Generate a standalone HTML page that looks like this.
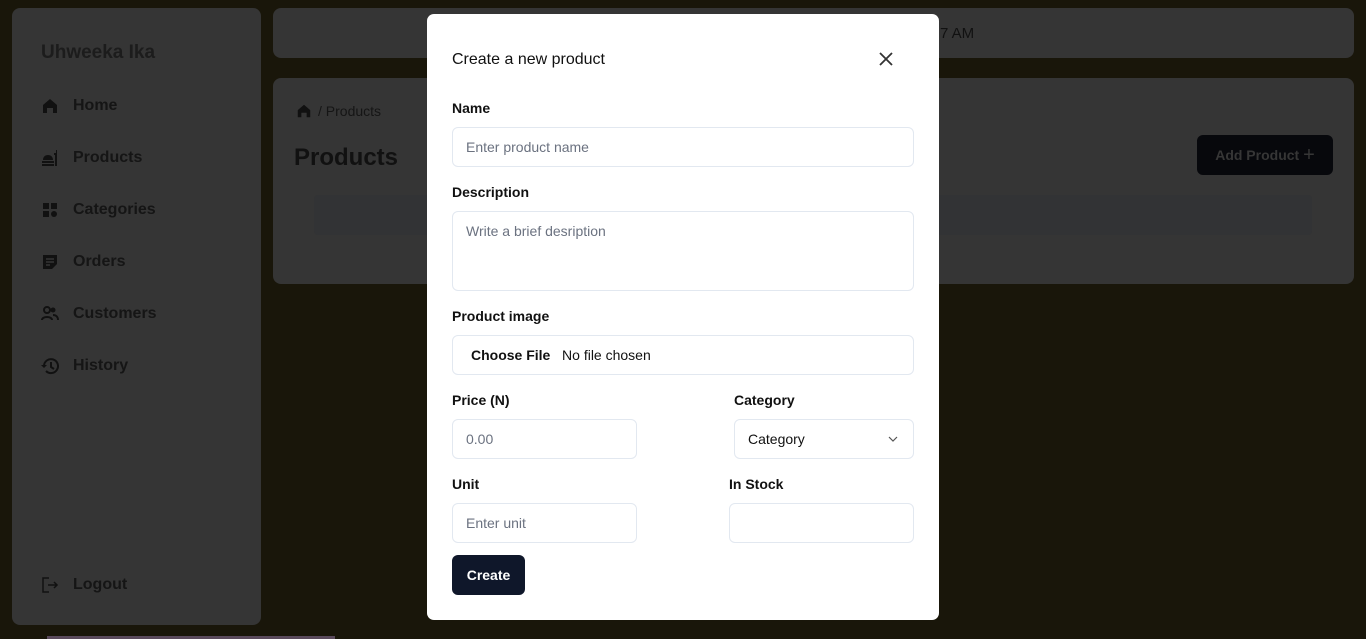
<!DOCTYPE html>
<html><head><style>
*{box-sizing:border-box;margin:0;padding:0}
body{width:1366px;height:639px;background:#19160a;font-family:"Liberation Sans",sans-serif;position:relative;overflow:hidden;color:#111}
.panel{position:absolute;background:#353535;border-radius:8px}
.nav{position:absolute;left:41px;display:flex;align-items:center;font-size:16px;font-weight:bold;color:#151515}
.nav svg{width:18px;height:18px;margin-right:14px}
.modal{position:absolute;left:427px;top:14px;width:512px;height:606px;background:#fff;border-radius:7px}
.lbl{position:absolute;font-size:14px;font-weight:bold;color:#111}
.inp{position:absolute;border:1px solid #e2e8f0;border-radius:6px;font-size:14px;color:#6b7280;padding-left:13px;display:flex;align-items:center}
</style></head><body>
<div class="panel" style="left:12px;top:8px;width:249px;height:617px"></div>
<div style="position:absolute;left:41px;top:42px;font-size:19px;font-weight:bold;color:#1c1c1c">Uhweeka Ika</div>
<div class="nav" style="top:97px"><svg viewBox="0 0 18 18"><path d="M2 8L9 2l7 6v8h-4v-5H6v5H2z" fill="#111"/></svg>Home</div>
<div class="nav" style="top:149px"><svg viewBox="0 0 18 18"><path d="M1 12h12v2H1zM1 15h12v2H1zM2 11c0-3 2-5 5-5s5 2 5 5zM13 4h2V1h1v16h-2V6h-1z" fill="#111"/></svg>Products</div>
<div class="nav" style="top:201px"><svg viewBox="0 0 18 18"><rect x="2" y="2" width="6" height="6" fill="#111"/><rect x="10" y="2" width="6" height="6" fill="#111"/><rect x="2" y="10" width="6" height="6" fill="#111"/><circle cx="13" cy="13" r="3" fill="#111"/></svg>Categories</div>
<div class="nav" style="top:253px"><svg viewBox="0 0 18 18"><path d="M2 2h14v9l-5 5H2z" fill="#111"/><path d="M5 6h8M5 9h8M5 12h4" stroke="#353535" stroke-width="1.5"/></svg>Orders</div>
<div class="nav" style="top:305px"><svg viewBox="0 0 18 18"><circle cx="6" cy="5" r="3" fill="none" stroke="#111" stroke-width="2"/><circle cx="12" cy="5" r="2.5" fill="#111"/><path d="M1 15c0-4 10-4 10 0M12 10c3 0 5 2 5 5" fill="none" stroke="#111" stroke-width="2"/></svg>Customers</div>
<div class="nav" style="top:357px"><svg viewBox="0 0 18 18"><path d="M3 9a7 7 0 1 1 2 5" fill="none" stroke="#111" stroke-width="2"/><path d="M0 8l3 3 3-3z" fill="#111"/><path d="M10 5v5l3 2" fill="none" stroke="#111" stroke-width="2"/></svg>History</div>
<div class="nav" style="top:576px"><svg viewBox="0 0 18 18"><path d="M8 2H2v14h6M7 9h9M13 6l3 3-3 3" fill="none" stroke="#111" stroke-width="1.5"/></svg>Logout</div>
<div style="position:absolute;left:47px;top:636px;width:288px;height:3px;background:#5a4a5c"></div>

<div class="panel" style="left:273px;top:8px;width:1081px;height:50px"></div>
<div style="position:absolute;left:940px;top:25px;font-size:15px;color:#111">7 AM</div>
<div class="panel" style="left:273px;top:78px;width:1081px;height:206px"></div>
<svg style="position:absolute;left:296px;top:103px" width="16" height="16" viewBox="0 0 18 18"><path d="M2 8L9 2l7 6v8h-4v-5H6v5H2z" fill="#111"/></svg>
<div style="position:absolute;left:318px;top:103px;font-size:14px;color:#151515">/ Products</div>
<div style="position:absolute;left:294px;top:144px;font-size:24px;font-weight:bold;color:#111">Products</div>
<div style="position:absolute;left:314px;top:195px;width:998px;height:40px;background:#323335;border-radius:4px"></div>
<div style="position:absolute;left:1197px;top:135px;width:136px;height:40px;background:#07080c;border-radius:6px;color:#363636;font-size:14px;font-weight:bold;display:flex;align-items:center;justify-content:center">Add Product&nbsp;<span style="font-size:20px;font-weight:normal">+</span></div>

<div class="modal">
<div style="position:absolute;left:25px;top:37px;font-size:16px;color:#111">Create a new product</div>
<svg style="position:absolute;left:451px;top:37px" width="16" height="16" viewBox="0 0 16 16"><path d="M2 2l12 12M14 2L2 14" stroke="#333" stroke-width="1.8"/></svg>
<div class="lbl" style="left:25px;top:86px">Name</div>
<div class="inp" style="left:25px;top:113px;width:462px;height:40px">Enter product name</div>
<div class="lbl" style="left:25px;top:170px">Description</div>
<div class="inp" style="left:25px;top:197px;width:462px;height:80px;align-items:flex-start;padding-top:11px">Write a brief desription</div>
<div class="lbl" style="left:25px;top:294px">Product image</div>
<div class="inp" style="left:25px;top:321px;width:462px;height:40px;padding-left:18px;color:#111"><b>Choose File</b>&nbsp;&nbsp;&nbsp;No file chosen</div>
<div class="lbl" style="left:25px;top:378px">Price (N)</div>
<div class="lbl" style="left:307px;top:378px">Category</div>
<div class="inp" style="left:25px;top:405px;width:185px;height:40px">0.00</div>
<div class="inp" style="left:307px;top:405px;width:180px;height:40px;color:#111">Category<svg style="position:absolute;right:15px;top:16px" width="10" height="6" viewBox="0 0 10 6"><path d="M1 1l4 4 4-4" fill="none" stroke="#555" stroke-width="1.2"/></svg></div>
<div class="lbl" style="left:25px;top:462px">Unit</div>
<div class="lbl" style="left:302px;top:462px">In Stock</div>
<div class="inp" style="left:25px;top:489px;width:185px;height:40px">Enter unit</div>
<div class="inp" style="left:302px;top:489px;width:185px;height:40px"></div>
<div style="position:absolute;left:25px;top:541px;width:73px;height:40px;background:#0f172a;border-radius:6px;color:#fff;font-size:14px;font-weight:bold;display:flex;align-items:center;justify-content:center">Create</div>
</div>
</body></html>
